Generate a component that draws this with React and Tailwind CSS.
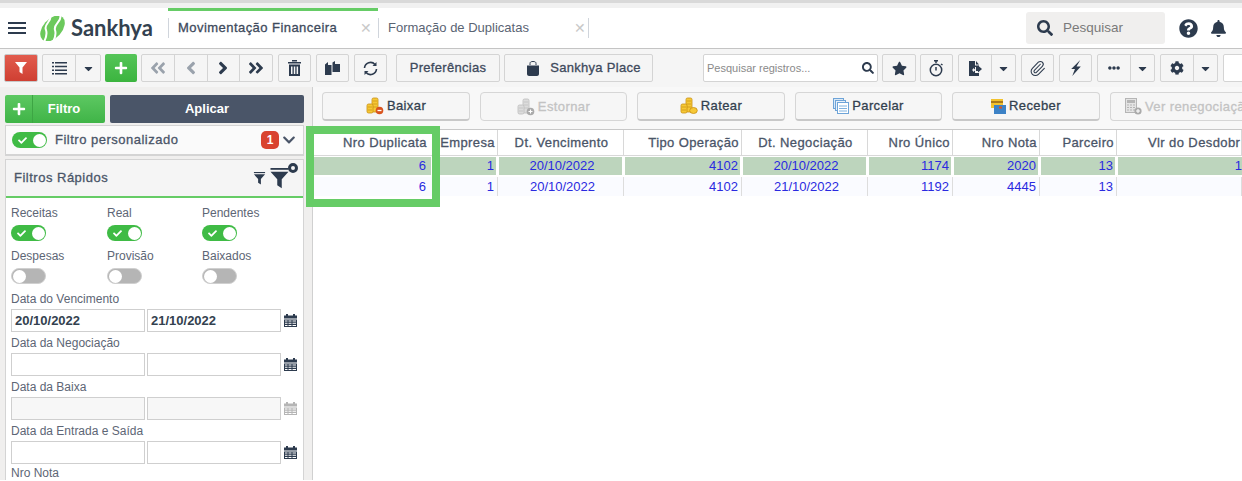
import React from "react";
import {
  FaPlus, FaAngleDoubleLeft, FaAngleLeft, FaAngleRight, FaAngleDoubleRight,
  FaSearch, FaStar, FaEllipsisH, FaCog, FaQuestionCircle, FaBell, FaCaretDown, FaCheck, FaChevronDown,
} from "react-icons/fa";
import { Paperclip } from "lucide-react";

const font = "font-['Liberation_Sans',Arial,sans-serif]";
const semi = "[-webkit-text-stroke:0.3px]";

const Logo = () => (
  <svg width="29" height="25" viewBox="0 0 29 25">
    <ellipse cx="14.500" cy="12.500" rx="15" ry="9.500" transform="rotate(-48 14.500 12.500)" fill="#6cc95c" />
    <path d="M12 -1 C15 5 5 8 8 14 C9 17 9 20 6 26" fill="none" stroke="#fff" strokeWidth="2" />
    <path d="M22 -1 C25 5 15 8 17 14 C18 17 18 20 15 26" fill="none" stroke="#fff" strokeWidth="2" />
  </svg>
);

const Funnel = ({ size = 14, color = "#2d3b4e", bar }) => (
  <svg width={size} height={size} viewBox="0 0 14 14" fill={color} className="shrink-0">
    {bar && <rect x="1" y="0" width="12" height="1.200" />}
    <path d={bar ? "M1 2.500h12L8.500 7.500V13.500L5.500 11.500V7.500Z" : "M1 1h12L8.500 6.500V13L5.500 11V6.500Z"} />
  </svg>
);

const Coins = ({ disabled, badge }) => {
  const a = disabled ? "#dcdcdc" : "#f6c836";
  const b = disabled ? "#bdbdbd" : "#c98f12";
  return (
    <svg width="18" height="18" viewBox="0 0 18 18" className="shrink-0">
      <rect x="6" y="1" width="6" height="14" rx="1.500" fill={a} stroke={b} strokeWidth="0.800" />
      <rect x="1" y="7" width="6" height="9" rx="1.500" fill={a} stroke={b} strokeWidth="0.800" />
      <path d="M7 4h4M7 7h4M7 10h4M2 10h4M2 13h4" stroke={b} strokeWidth="0.700" />
      {badge === "minus" && <circle cx="13.500" cy="13.500" r="3.800" fill="#d9541e" />}
      {badge === "minus" && <path d="M11.500 13.500h4" stroke="#fff" strokeWidth="1.300" />}
      {badge === "plus" && <circle cx="13.500" cy="13.500" r="3.800" fill="#aaa" />}
      {badge === "plus" && <path d="M11.500 13.500h4M13.500 11.500v4" stroke="#fff" strokeWidth="1.100" />}
      {badge === "coin" && <ellipse cx="13.500" cy="13.500" rx="3.800" ry="3" fill={a} stroke={b} strokeWidth="0.800" />}
    </svg>
  );
};

const Sheets = () => (
  <svg width="16" height="16" viewBox="0 0 16 16" fill="#fff" stroke="#6ea4d8" strokeWidth="1" className="shrink-0">
    <rect x="0.500" y="0.500" width="10" height="10" fill="#dbe9f6" />
    <rect x="2.500" y="2.500" width="10" height="10" fill="#e8f1fa" />
    <rect x="4.500" y="4.500" width="11" height="11" />
    <path d="M6 8h8M6 10.500h8M6 13h8" stroke="#7fb2e0" />
  </svg>
);

const Cards = () => (
  <svg width="15" height="15" viewBox="0 0 15 15" className="shrink-0">
    <rect x="0" y="0" width="12" height="9" fill="#f2c22e" />
    <rect x="0" y="2" width="12" height="2" fill="#a9781a" />
    <rect x="3" y="6" width="12" height="9" fill="#3d82c6" />
    <rect x="8" y="7.500" width="3" height="2" fill="#d9541e" />
  </svg>
);

const Calc = () => (
  <svg width="17" height="17" viewBox="0 0 17 17" className="shrink-0">
    <rect x="0.500" y="0.500" width="11" height="14" fill="#e4e4e4" stroke="#b5b5b5" />
    <rect x="2" y="2" width="8" height="3" fill="#b5b5b5" />
    <path d="M2 7h8M2 9.500h8M2 12h8" stroke="#b5b5b5" strokeDasharray="2 1" />
    <circle cx="13" cy="13" r="3.600" fill="#aaa" />
    <path d="M11 13h4M13 11v4" stroke="#fff" strokeWidth="1.100" />
  </svg>
);

const Trash = () => (
  <svg width="13" height="16" viewBox="0 0 13 16" fill="#2d3b4e">
    <rect x="4" y="0" width="5" height="1.500" />
    <rect x="0" y="2" width="13" height="1.500" />
    <path d="M1 4.500h11V16H1Zm2 2v7.500h1.500V6.500Zm2.800 0v7.500h1.500V6.500Zm2.800 0v7.500h1.500V6.500Z" fillRule="evenodd" />
  </svg>
);

const Docs = () => (
  <svg width="15" height="14" viewBox="0 0 15 14" fill="#2d3b4e">
    <path d="M0 3.500 3 1V4H6.500V14H0Z" />
    <path d="M7.500 1.500 10 0V3H15V11H7.500Z" />
  </svg>
);

const Refresh = () => (
  <svg width="15" height="15" viewBox="0 0 15 15" fill="none" stroke="#2d3b4e" strokeWidth="1.600">
    <path d="M1.500 7A6 6 0 0 1 12 3.500" />
    <path d="M13.500 8A6 6 0 0 1 3 11.500" />
    <path d="M13.500 1v4h-4Z" fill="#2d3b4e" stroke="none" />
    <path d="M1.500 14v-4h4Z" fill="#2d3b4e" stroke="none" />
  </svg>
);

const Bag = () => (
  <svg width="14" height="15" viewBox="0 0 14 15" fill="#2d3b4e">
    <path d="M1 4.500h12V13c0 1-1 2-2 2H3c-1 0-2-1-2-2Z" />
    <path d="M4 4V2.500C4 1 5 .5 7 .5s3 .5 3 2V4" fill="none" stroke="#2d3b4e" />
  </svg>
);

const Timer = () => (
  <svg width="15" height="17" viewBox="0 0 15 17" fill="none" stroke="#2d3b4e" strokeWidth="1.500">
    <rect x="5" y="0" width="4" height="1.500" fill="#2d3b4e" stroke="none" />
    <path d="M7 1v2" />
    <circle cx="7" cy="10" r="5.700" />
    <path d="M7 7v3.500" />
    <path d="M12 4l1.500 1" />
  </svg>
);

const FileIcon = () => (
  <svg width="13" height="15" viewBox="0 0 13 15" fill="#2d3b4e">
    <path d="M0 0h6v4.500h4V6H6v2.500L4 7v1.500H3v1h1V11l2-1.500V12h4v3H0Z" />
    <path d="M7 0l3 3.500H7Z" />
    <path d="M7 6h2V4.500L13 8l-4 3.500V10H7Z" />
  </svg>
);

const Bolt = () => (
  <svg width="10" height="16" viewBox="0 0 9 15" fill="#2d3b4e">
    <path d="M8.500 0 0 8.500h3.500L1 15l8-9H5Z" />
  </svg>
);

const Calendar = ({ muted }) => (
  <svg width="13" height="14" viewBox="0 0 13 14" className="shrink-0" fill={muted ? "#b5b5b5" : "#2d3b4e"}>
    <rect x="2" y="0" width="2" height="2" />
    <rect x="9" y="0" width="2" height="2" />
    <rect x="0" y="1.500" width="13" height="3" />
    <path d="M0 5.500h13V13H0Zm1 1v1h2.500v-1Zm3.500 0v1h3v-1Zm4 0v1H12v-1Zm-7.500 2.200v1h2.500v-1Zm3.500 0v1h3v-1Zm4 0v1H12v-1Zm-7.500 2.200v1h2.500v-1Zm3.500 0v1h3v-1Zm4 0v1H12v-1Z" fillRule="evenodd" />
  </svg>
);

const ToolBtn = ({ w, ml, children }) => (
  <div className={`${w} ${ml} h-[28px] shrink-0 flex items-center justify-center rounded-[2px] border border-[#d4d4d4] bg-[#f5f5f5] text-[#2d3b4e]`}>
    {children}
  </div>
);

const Split = ({ w, ml, icon }) => (
  <div className={`${w} ${ml} h-[28px] shrink-0 flex rounded-[2px] border border-[#d4d4d4] bg-[#f5f5f5] text-[#2d3b4e]`}>
    <div className="w-[33px] flex items-center justify-center border-r border-[#d4d4d4]">{icon}</div>
    <div className="flex-1 flex items-center justify-center"><FaCaretDown size={13} /></div>
  </div>
);

const ActionBtn = ({ w, ml, icon, label, disabled }) => (
  <div className={`${w} ${ml} h-[29px] shrink-0 flex items-center justify-center gap-[3px] rounded-[4px] border border-[#d6d6d6] bg-[#f6f6f6] text-[13px] tracking-[0.4px] ${semi} ${disabled ? "text-[#c3c3c3]" : "text-[#33414f] border-b-2 border-b-[#c8c8c8]"}`}>
    {icon}
    <span className="whitespace-nowrap">{label}</span>
  </div>
);

const Toggle = ({ on }) => (
  <div className={`w-[35px] h-[16px] shrink-0 rounded-full flex items-center px-[1px] relative ${on ? "bg-[#3fbb45] justify-end" : "bg-[#b5b5b5] justify-start border border-[#d0d0d0]"}`}>
    {on && <FaCheck size={9} className="absolute left-[6px] text-white" />}
    <div className="w-[13px] h-[13px] rounded-full bg-white" />
  </div>
);

const Switch = ({ label, on, w = "w-[96px]" }) => (
  <div className={`${w} shrink-0`}>
    <div className="h-[16px] leading-[16px] text-[12px] text-[#5d6675]">{label}</div>
    <div className="mt-[4px]"><Toggle on={on} /></div>
  </div>
);

const DateField = ({ label, from, to, disabled }) => (
  <div className="mt-[3px]">
    <div className="h-[17px] leading-[17px] text-[12px] text-[#5d6675]">{label}</div>
    <div className="flex items-center gap-[2px] mt-[1px]">
      {[from, to].map((v, i) => (
        <div key={i} className={`w-[134px] h-[23px] border border-[#cfcfcf] px-[3px] leading-[22px] text-[13px] font-bold text-[#33414f] ${disabled ? "bg-[#f7f7f7]" : "bg-white"}`}>{v}</div>
      ))}
      <div className="ml-[1px]"><Calendar muted={disabled} /></div>
    </div>
  </div>
);

const cols = [
  { w: "w-[120px]", title: "Nro Duplicata", a: "6", b: "6", head: "text-right pr-[5px]", cellA: "text-right pr-[5px] mr-[2px]", cellB: "text-right pr-[6px]" },
  { w: "w-[65px]", title: "Empresa", a: "1", b: "1", head: "text-right pr-[2px]", cellA: "text-right pr-[2px] mr-[2px]", cellB: "text-right pr-[3px]" },
  { w: "w-[126px]", title: "Dt. Vencimento", a: "20/10/2022", b: "20/10/2022", head: "text-center pl-[2px]", cellA: "text-center pl-[3px] mr-[2px]", cellB: "text-center pl-[4px]" },
  { w: "w-[118px]", title: "Tipo Operação", a: "4102", b: "4102", head: "text-right pr-[2px]", cellA: "text-right pr-[2px] mr-[2px]", cellB: "text-right pr-[3px]" },
  { w: "w-[126px]", title: "Dt. Negociação", a: "20/10/2022", b: "21/10/2022", head: "text-center pl-[2px]", cellA: "text-center pl-[3px] mr-[2px]", cellB: "text-center pl-[4px]" },
  { w: "w-[85px]", title: "Nro Único", a: "1174", b: "1192", head: "text-right pr-[2px]", cellA: "text-right pr-[2px] mr-[2px]", cellB: "text-right pr-[3px]" },
  { w: "w-[87px]", title: "Nro Nota", a: "2020", b: "4445", head: "text-right pr-[2px]", cellA: "text-right pr-[2px] mr-[2px]", cellB: "text-right pr-[3px]" },
  { w: "w-[77px]", title: "Parceiro", a: "13", b: "13", head: "text-right pr-[2px]", cellA: "text-right pr-[2px] mr-[2px]", cellB: "text-right pr-[3px]" },
  { w: "w-[125px]", title: "Vlr do Desdobr", a: "1", b: "", head: "pl-[31px]", cellA: "text-right", cellB: "" },
];

export default function App() {
  return (
    <div className={`${font} relative w-[1242px] h-[481px] overflow-hidden bg-white`}>
      {/* browser strip */}
      <div className="h-[8px] bg-[#f1f1f1]"><div className="h-[3px] bg-[#d9d9d9]" /></div>

      {/* header */}
      <div className="h-[41px] flex items-center border-b border-[#c4c4c4] bg-white">
        <div className="ml-[8px] w-[18px] flex flex-col gap-[3px]">
          <div className="h-[2px] bg-[#2d3b4e]" /><div className="h-[2px] bg-[#2d3b4e]" /><div className="h-[2px] bg-[#2d3b4e]" />
        </div>
        <div className="ml-[12px]"><Logo /></div>
        <div className="ml-[4px] w-[97px] font-['Lato',sans-serif] font-bold text-[22px] leading-[22px] text-[#33414f]">Sankhya</div>
        <div className="w-[210px] h-[40px] flex items-center relative">
          <div className="absolute top-0 left-0 right-0 h-[3px] bg-[#66cc66]" />
          <div className="h-[20px] border-l border-[#d0d5dc]" />
          <span className={`ml-[9px] text-[13px] tracking-[0.45px] text-[#3e4a5c] ${semi}`}>Movimentação Financeira</span>
          <span className="absolute right-[6px] text-[14px] text-[#c9c9c9]">✕</span>
        </div>
        <div className="w-[210px] h-[40px] flex items-center relative">
          <div className="h-[20px] border-l border-[#d0d5dc]" />
          <span className="ml-[9px] text-[13px] text-[#5a6473]">Formação de Duplicatas</span>
          <span className="absolute right-[2px] text-[14px] text-[#c9c9c9]">✕</span>
        </div>
        <div className="h-[20px] border-l border-[#d0d5dc]" />
        <div className="ml-[437px] w-[139px] h-[32px] shrink-0 flex items-center rounded-[3px] bg-[#f0efee]">
          <FaSearch size={16} className="ml-[11px] text-[#2d3b4e]" />
          <span className="ml-[10px] text-[13.500px] text-[#7a7a7a]">Pesquisar</span>
        </div>
        <FaQuestionCircle size={19} className="ml-[14px] shrink-0 text-[#2d3b4e]" />
        <FaBell size={17} className="ml-[12px] shrink-0 text-[#2d3b4e]" />
      </div>

      {/* toolbar */}
      <div className="h-[38px] flex items-center pl-[4px] bg-[#f5f5f5]">
        <div className="w-[34px] h-[28px] shrink-0 flex items-center justify-center rounded-[2px] bg-linear-to-b from-[#e25c4e] to-[#cf3f32] border border-[#c8c8c8]"><Funnel size={14} color="#fff" /></div>
        <Split w="w-[59px]" ml="ml-[4px]" icon={<svg width="15" height="13" viewBox="0 0 15 13" fill="#2d3b4e"><path d="M0 0h2v1.500H0Zm3 0h12v1.500H3ZM0 3.700h2v1.500H0Zm3 0h12v1.500H3ZM0 7.400h2v1.500H0Zm3 0h12v1.500H3ZM0 11h2v1.500H0Zm3 0h12v1.500H3Z" /></svg>} />
        <div className="ml-[4px] w-[32px] h-[28px] shrink-0 flex items-center justify-center rounded-[2px] bg-linear-to-b from-[#55c558] to-[#3bb43f]"><FaPlus size={14} className="text-white" /></div>
        <div className="ml-[4px] w-[132px] h-[28px] shrink-0 flex rounded-[2px] border border-[#d4d4d4] bg-[#f5f5f5] text-[#2d3b4e]">
          <div className="flex-1 flex items-center justify-center border-r border-[#d4d4d4]"><FaAngleDoubleLeft size={18} className="text-[#9aa2ac]" /></div>
          <div className="flex-1 flex items-center justify-center border-r border-[#d4d4d4]"><FaAngleLeft size={20} className="text-[#9aa2ac]" /></div>
          <div className="flex-1 flex items-center justify-center border-r border-[#d4d4d4]"><FaAngleRight size={20} /></div>
          <div className="flex-1 flex items-center justify-center"><FaAngleDoubleRight size={18} /></div>
        </div>
        <ToolBtn w="w-[33px]" ml="ml-[5px]"><Trash /></ToolBtn>
        <ToolBtn w="w-[33px]" ml="ml-[5px]"><Docs /></ToolBtn>
        <ToolBtn w="w-[33px]" ml="ml-[5px]"><Refresh /></ToolBtn>
        <ToolBtn w="w-[104px]" ml="ml-[9px]"><span className={`text-[13px] tracking-[0.3px] text-[#3e4a5c] ${semi}`}>Preferências</span></ToolBtn>
        <ToolBtn w="w-[149px]" ml="ml-[4px]">
          <div className="ml-[10px]"><Bag /></div>
          <span className={`ml-[10px] text-[13px] tracking-[0.3px] text-[#3e4a5c] ${semi}`}>Sankhya Place</span>
        </ToolBtn>
        <div className="ml-[50px] w-[175px] h-[28px] shrink-0 flex items-center justify-between rounded-[2px] border border-[#d4d4d4] bg-white px-[3px]">
          <span className="text-[11px] text-[#8a8a8a]">Pesquisar registros...</span>
          <FaSearch size={12} className="text-[#2d3b4e]" />
        </div>
        <ToolBtn w="w-[34px]" ml="ml-[4px]"><FaStar size={15} /></ToolBtn>
        <ToolBtn w="w-[33px]" ml="ml-[4px]"><Timer /></ToolBtn>
        <Split w="w-[58px]" ml="ml-[5px]" icon={<FileIcon />} />
        <ToolBtn w="w-[33px]" ml="ml-[5px]"><Paperclip size={17} strokeWidth={1.500} /></ToolBtn>
        <ToolBtn w="w-[33px]" ml="ml-[5px]"><Bolt /></ToolBtn>
        <Split w="w-[58px]" ml="ml-[5px]" icon={<FaEllipsisH size={12} />} />
        <Split w="w-[58px]" ml="ml-[5px]" icon={<FaCog size={14} />} />
        <div className="ml-[5px] w-[30px] h-[28px] shrink-0 rounded-l-[2px] border border-[#d4d4d4] bg-white" />
      </div>

      <div className="flex h-[393px]">
        {/* sidebar */}
        <div className="w-[313px] shrink-0 bg-[#f0efee] border-r border-[#d0d0d0] pl-[5px] pt-[8px] overflow-hidden">
          <div className="flex gap-[5px]">
            <div className="w-[100px] h-[28px] flex items-center rounded-[2px] bg-linear-to-b from-[#5dc862] to-[#3fb447] text-white text-[13px] font-bold">
              <div className="w-[28px] flex justify-center border-r border-[#3da544] h-[28px] items-center"><FaPlus size={14} /></div>
              <span className="flex-1 text-center pr-[10px]">Filtro</span>
            </div>
            <div className="w-[194px] h-[28px] flex items-center justify-center rounded-[2px] bg-[#4a5568] text-white text-[13px] font-bold">Aplicar</div>
          </div>

          <div className="mt-[2px] w-[299px] h-[31px] flex items-center bg-[#fafafa] border border-[#d4d4d4] border-b-2 pl-[6px] pr-[7px]">
            <Toggle on />
            <span className={`ml-[8px] text-[13px] tracking-[0.5px] text-[#4a5568] ${semi}`}>Filtro personalizado</span>
            <span className="ml-auto w-[18px] h-[18px] rounded-[5px] bg-[#d9432f] text-white text-[12px] font-bold flex items-center justify-center">1</span>
            <FaChevronDown size={14} className="ml-[3px] text-[#4a5568]" />
          </div>

          <div className="mt-[3px] w-[299px] h-[330px] bg-white border border-[#d4d4d4]">
            <div className="h-[38px] flex items-center bg-[#f5f5f5] border-b-2 border-[#66cc66] pl-[8px] pr-[4px] relative">
              <span className={`text-[13px] tracking-[0.5px] text-[#4a5568] ${semi}`}>Filtros Rápidos</span>
              <div className="ml-auto flex items-center mr-[9px] gap-[3px]">
                <Funnel size={13} bar />
                <Funnel size={21} bar />
              </div>
              <div className="absolute right-[5px] top-[3px] w-[10px] h-[10px] rounded-full border-[3px] border-[#2d3b4e]" />
            </div>
            <div className="pl-[5px] pt-[7px]">
              <div className="flex">
                <Switch label="Receitas" on /><Switch label="Real" on w="w-[95px]" /><Switch label="Pendentes" on />
              </div>
              <div className="flex mt-[7px]">
                <Switch label="Despesas" /><Switch label="Provisão" w="w-[95px]" /><Switch label="Baixados" />
              </div>
              <div className="mt-[7px]">
                <DateField label="Data do Vencimento" from="20/10/2022" to="21/10/2022" />
                <DateField label="Data da Negociação" />
                <DateField label="Data da Baixa" disabled />
                <DateField label="Data da Entrada e Saída" />
                <div className="h-[18px] leading-[18px] text-[12px] text-[#5d6675]">Nro Nota</div>
              </div>
            </div>
          </div>
        </div>

        {/* main */}
        <div className="flex-1 min-w-0 overflow-hidden">
          <div className="h-[42px] flex items-start pt-[5px] pl-[9px] bg-[#f8f8f8]">
            <ActionBtn w="w-[148px]" icon={<Coins badge="minus" />} label="Baixar" />
            <ActionBtn w="w-[147px]" ml="ml-[10px]" icon={<Coins disabled badge="plus" />} label="Estornar" disabled />
            <ActionBtn w="w-[148px]" ml="ml-[10px]" icon={<Coins badge="coin" />} label="Ratear" />
            <ActionBtn w="w-[147px]" ml="ml-[10px]" icon={<Sheets />} label="Parcelar" />
            <ActionBtn w="w-[148px]" ml="ml-[10px]" icon={<Cards />} label="Receber" />
            <div className={`ml-[10px] h-[29px] w-[132px] shrink-0 flex items-center gap-[3px] pl-[14px] rounded-l-[4px] border border-r-0 border-[#d6d6d6] bg-[#f6f6f6] text-[13px] tracking-[0.4px] text-[#c3c3c3] ${semi} overflow-hidden`}>
              <Calc />
              <span className="whitespace-nowrap">Ver renegociaçã</span>
            </div>
          </div>
          <div className="flex border-t border-[#c8c8c8]">
            {cols.map((c, i) => (
              <div key={i} className={`${c.w} shrink-0 overflow-hidden`}>
                <div className={`h-[26px] leading-[25px] border-b border-r border-[#d8d8d8] text-[13px] tracking-[0.4px] text-[#4a5568] ${semi} whitespace-nowrap ${c.head}`}>{c.title}</div>
                <div className={`mt-[1px] h-[18px] ml-[1px] leading-[18px] bg-[#bdd5bd] text-[13px] text-[#2a2ae0] ${c.cellA}`}>{c.a}</div>
                <div className={`mt-[2px] h-[19px] leading-[20px] bg-[#fafbff] border-r border-[#dddddd] text-[13px] text-[#2a2ae0] ${c.cellB}`}>{c.b}</div>
              </div>
            ))}
          </div>
        </div>
      </div>

      {/* green highlight drawn over the grid */}
      <div className="absolute left-[306px] top-[126px] w-[134px] h-[81px] border-[8px] border-[#66cc66]" />
    </div>
  );
}
